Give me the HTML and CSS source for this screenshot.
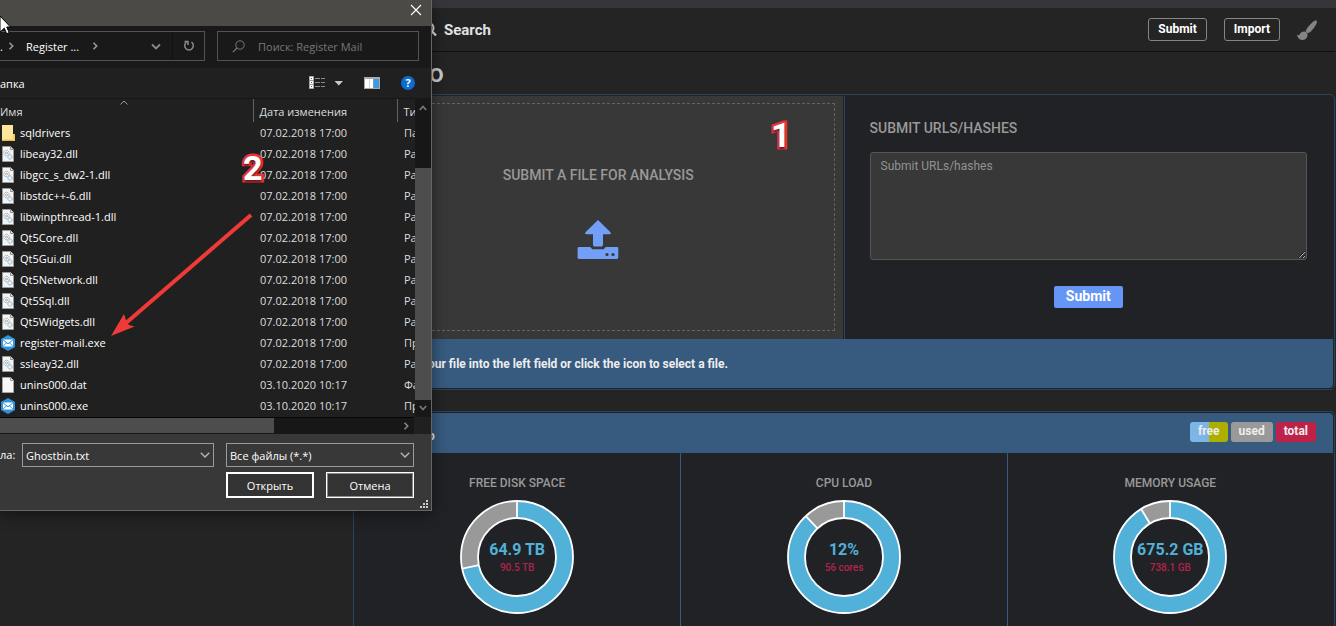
FILE: index.html
```html
<!DOCTYPE html>
<html lang="ru">
<head>
<meta charset="utf-8">
<title>Submit</title>
<link rel="stylesheet" href="styles.css">
</head>
<body>
<svg width="0" height="0" class="defs" aria-hidden="true">
  <symbol id="i-dll" viewBox="0 0 14 16">
    <path d="M1.500.5h8l3 3v12h-11z" fill="#f4f4f4" stroke="#9b9b9b"/>
    <path d="M9.500.5v3h3" fill="#ddd" stroke="#8f8f8f"/>
    <circle cx="5.500" cy="7" r="2.700" fill="#fff" stroke="#8d9499" stroke-dasharray="1 .6"/>
    <circle cx="5.500" cy="7" r="1" fill="none" stroke="#8d9499" stroke-width=".8"/>
    <circle cx="9" cy="11" r="2.200" fill="#d6edfb" stroke="#7fa9c6" stroke-dasharray="1 .6"/>
    <circle cx="9" cy="11" r=".8" fill="#fff"/>
  </symbol>
  <symbol id="i-dat" viewBox="0 0 14 16">
    <path d="M1.500.5h8l3 3v12h-11z" fill="#f8f8f8" stroke="#a5a5a5"/>
    <path d="M9.500.5v3h3" fill="#ddd" stroke="#999"/>
  </symbol>
  <symbol id="i-dir" viewBox="0 0 14 16">
    <path d="M1 0h11v9h2v7H1z" fill="#e8bd45"/>
    <path d="M1 0h11v14.500H1z" fill="#ffe69a"/>
    <path d="M11.500 9.500h2v6h-2z" fill="#f6d56e"/>
  </symbol>
  <symbol id="i-exe" viewBox="0 0 14 16">
    <path d="M7 0l7 4v8l-7 4-7-4V4z" fill="#2f93dc"/>
    <path d="M2 4.500h10v7H2z" fill="#fff"/>
    <path d="M2 4.800l5 4 5-4M2 11.300l3.600-3.600M12 11.300L8.400 7.700" fill="none" stroke="#2f93dc"/>
  </symbol>
  <symbol id="i-down" viewBox="0 0 10 6"><path d="M.8.8L5 5 9.200.8" fill="none" stroke="currentColor" stroke-width="1.300"/></symbol>
  <symbol id="i-right" viewBox="0 0 6 8"><path d="M1.500.8L4.700 4 1.500 7.200" fill="none" stroke="currentColor" stroke-width="1.600"/></symbol>
</svg>

<main class="page">
  <nav class="nav">
    <a class="nav-search" href="#search">
      <svg width="16" height="16" viewBox="0 0 16 16"><circle cx="6.500" cy="6" r="5" fill="none" stroke="#ddd" stroke-width="2"/><path d="M10 9.500l4 4" stroke="#ddd" stroke-width="2.400"/></svg>
      Search
    </a>
    <div class="nav-actions">
      <button class="nav-btn" type="button">Submit</button>
      <button class="nav-btn" type="button">Import</button>
      <button class="brush" type="button" aria-label="Theme">
        <svg width="20" height="20" viewBox="0 0 20 20" fill="#848484"><path d="M18.800.3c1 .2 1.300 1 1.100 1.900-.6 3-4.600 8.300-7.400 10.400-.8.6-1.900.7-2.700.1-.9-.6-1.200-1.700-.7-2.600C10.600 7 16.200.9 18.800.3z"/><path d="M7.600 11.600c1 .1 1.700.7 2.300 1.400.5.700.8 1.400.6 2.400-.5 3-2.600 4.500-5.300 4.500C2.200 19.900.3 17.500 0 14.500c.8.5 1.700 1 2.300.6.400-.3.500-.9.900-1.500.9-1.300 2.500-2.200 4.400-2z"/></svg>
      </button>
    </div>
  </nav>

  <h1 class="brand">o</h1>

  <section class="card">
    <div class="submit-grid">
      <div class="drop">
        <div class="drop-zone">
          <h2 class="label">SUBMIT A FILE FOR ANALYSIS</h2>
          <button class="upload" type="button" aria-label="Select a file">
            <svg width="42" height="40" viewBox="0 0 42 40"><path d="M21 0l12.500 12.200c.7.800.5 2-.8 2H26v10.300c0 1.400-.8 2-2 2h-6c-1.200 0-2-.6-2-2V14.200H9.300c-1.300 0-1.500-1.200-.8-2z" fill="#729ff8"/><path d="M2 27h11.300l1.300 1.400c.6.600 1.200.9 2 .9h8.800c.8 0 1.400-.3 2-.9l1.300-1.400H40c.8 0 1.300.6 1.300 1.400v9.200c0 .9-.6 1.400-1.400 1.400H2c-.8 0-1.400-.5-1.400-1.400v-9.200C.6 27.600 1.200 27 2 27z" fill="#729ff8"/><circle cx="30" cy="34.500" r="1.600" fill="#383838"/><circle cx="36" cy="34.500" r="1.600" fill="#383838"/></svg>
          </button>
        </div>
      </div>
      <form class="urls">
        <label class="label" for="urls">SUBMIT URLS/HASHES</label>
        <textarea id="urls" class="urls-text" placeholder="Submit URLs/hashes"></textarea>
        <button class="urls-submit" type="button">Submit</button>
      </form>
    </div>
    <p class="hint">our file into the left field or click the icon to select a file.</p>
  </section>

  <section class="card card-info">
    <header class="info-head">
      <h2 class="info-title">o</h2>
      <ul class="legend">
        <li class="tag tag-free">free</li>
        <li class="tag tag-used">used</li>
        <li class="tag tag-total">total</li>
      </ul>
    </header>
    <div class="gauges">
      <div class="gauge">
        <h3 class="gauge-title">FREE DISK SPACE</h3>
        <div class="ring">
          <svg width="114" height="114" viewBox="-57 -57 114 114"><g fill="none" transform="rotate(-90)"><circle r="47.500" stroke="#999" stroke-width="17"/><circle r="47.500" stroke="#51b1d8" stroke-width="17" pathLength="100" stroke-dasharray="71.700 100"/><g stroke="#fff" stroke-width="1.800"><circle r="56"/><circle r="39"/><path d="M39 0H56"/><path d="M39 0H56" transform="rotate(258)"/></g></g></svg>
          <div class="ring-text"><strong class="value">64.9 TB</strong><span class="sub">90.5 TB</span></div>
        </div>
      </div>
      <div class="gauge">
        <h3 class="gauge-title">CPU LOAD</h3>
        <div class="ring">
          <svg width="114" height="114" viewBox="-57 -57 114 114"><g fill="none" transform="rotate(-90)"><circle r="47.500" stroke="#999" stroke-width="17"/><circle r="47.500" stroke="#51b1d8" stroke-width="17" pathLength="100" stroke-dasharray="88 100"/><g stroke="#fff" stroke-width="1.800"><circle r="56"/><circle r="39"/><path d="M39 0H56"/><path d="M39 0H56" transform="rotate(317)"/></g></g></svg>
          <div class="ring-text"><strong class="value">12%</strong><span class="sub">56 cores</span></div>
        </div>
      </div>
      <div class="gauge">
        <h3 class="gauge-title">MEMORY USAGE</h3>
        <div class="ring">
          <svg width="114" height="114" viewBox="-57 -57 114 114"><g fill="none" transform="rotate(-90)"><circle r="47.500" stroke="#999" stroke-width="17"/><circle r="47.500" stroke="#51b1d8" stroke-width="17" pathLength="100" stroke-dasharray="91.500 100"/><g stroke="#fff" stroke-width="1.800"><circle r="56"/><circle r="39"/><path d="M39 0H56"/><path d="M39 0H56" transform="rotate(329)"/></g></g></svg>
          <div class="ring-text"><strong class="value">675.2 GB</strong><span class="sub">738.1 GB</span></div>
        </div>
      </div>
    </div>
  </section>
</main>

<div class="dialog" role="dialog" aria-label="Register Mail">
  <div class="titlebar">
    <button class="close" type="button" aria-label="Close"><svg width="12" height="12" viewBox="0 0 12 12"><path d="M1 1l10 10M11 1L1 11" stroke="#fff" stroke-width="1.200"/></svg></button>
  </div>
  <div class="addressbar">
    <div class="path">
      <span class="dots">.</span>
      <svg width="6" height="8"><use href="#i-right"/></svg>
      <span class="crumb">Register ...</span>
      <svg width="6" height="8"><use href="#i-right"/></svg>
      <button class="path-open" type="button" aria-label="History"><svg width="10" height="7" viewBox="0 0 10 7"><path d="M1 1.500l4 4 4-4" fill="none" stroke="#8a8a8a" stroke-width="1.800"/></svg></button>
      <button class="refresh" type="button" aria-label="Refresh"><svg width="12" height="12" viewBox="0 0 12 12"><path d="M8.500 2.200a4.300 4.300 0 1 1-5 0" fill="none" stroke="#8a8a8a" stroke-width="1.500"/><path d="M1.500 1.500H5v3.500" fill="none" stroke="#8a8a8a" stroke-width="1.500"/></svg></button>
    </div>
    <label class="find">
      <svg width="13" height="13" viewBox="0 0 13 13"><circle cx="8" cy="5" r="4.200" fill="none" stroke="#777"/><path d="M5 8L.8 12.200" stroke="#777" stroke-width="1.200"/></svg>
      <input class="find-input" type="text" placeholder="Поиск: Register Mail" aria-label="Поиск: Register Mail">
    </label>
  </div>
  <div class="toolbar">
    <span class="toolbar-text">апка</span>
    <button class="tool" type="button" aria-label="View">
      <svg width="34" height="14" viewBox="0 0 34 14"><path d="M.5.500h4v12h-4z" fill="#fff" stroke="#aaa"/><path d="M0 4.500h5M0 8.500h5" stroke="#999"/><path d="M2 2h1v1H2z" fill="#555"/><path d="M2 6h1v1H2z" fill="#a33"/><path d="M2 10h1v1H2z" fill="#c33"/><path d="M6 2.500h5M12 2.500h4M6 6.500h5M12 6.500h4M6 10.500h5M12 10.500h4" stroke="#8a8a8a"/><path d="M25.500 5h8.500l-4.200 4.500z" fill="#c8c8c8"/></svg>
    </button>
    <button class="tool" type="button" aria-label="Preview pane">
      <svg width="16" height="12" viewBox="0 0 16 12"><path d="M0 0h16v12H0z" fill="#aaa"/><path d="M1 2h4v9H1zM5.500 2H9v9H5.500z" fill="#fff"/><path d="M9.500 2H15v9H9.500z" fill="#3c9be8"/></svg>
    </button>
    <button class="help" type="button" aria-label="Help">?</button>
  </div>
  <div class="files">
    <div class="files-main">
      <svg class="sort" width="8" height="5" viewBox="0 0 8 5"><path d="M.5 4.500L4 1l3.500 3.500" fill="none" stroke="#999"/></svg>
      <table class="list">
        <colgroup><col class="c-name"><col class="c-date"><col class="c-type"></colgroup>
        <thead><tr><th>Имя</th><th>Дата изменения</th><th>Ти</th></tr></thead>
        <tbody>
          <tr><td><span class="file"><svg width="14" height="16"><use href="#i-dir"/></svg>sqldrivers</span></td><td>07.02.2018 17:00</td><td>Па</td></tr>
          <tr><td><span class="file"><svg width="14" height="16"><use href="#i-dll"/></svg>libeay32.dll</span></td><td>07.02.2018 17:00</td><td>Ра</td></tr>
          <tr><td><span class="file"><svg width="14" height="16"><use href="#i-dll"/></svg>libgcc_s_dw2-1.dll</span></td><td>07.02.2018 17:00</td><td>Ра</td></tr>
          <tr><td><span class="file"><svg width="14" height="16"><use href="#i-dll"/></svg>libstdc++-6.dll</span></td><td>07.02.2018 17:00</td><td>Ра</td></tr>
          <tr><td><span class="file"><svg width="14" height="16"><use href="#i-dll"/></svg>libwinpthread-1.dll</span></td><td>07.02.2018 17:00</td><td>Ра</td></tr>
          <tr><td><span class="file"><svg width="14" height="16"><use href="#i-dll"/></svg>Qt5Core.dll</span></td><td>07.02.2018 17:00</td><td>Ра</td></tr>
          <tr><td><span class="file"><svg width="14" height="16"><use href="#i-dll"/></svg>Qt5Gui.dll</span></td><td>07.02.2018 17:00</td><td>Ра</td></tr>
          <tr><td><span class="file"><svg width="14" height="16"><use href="#i-dll"/></svg>Qt5Network.dll</span></td><td>07.02.2018 17:00</td><td>Ра</td></tr>
          <tr><td><span class="file"><svg width="14" height="16"><use href="#i-dll"/></svg>Qt5Sql.dll</span></td><td>07.02.2018 17:00</td><td>Ра</td></tr>
          <tr><td><span class="file"><svg width="14" height="16"><use href="#i-dll"/></svg>Qt5Widgets.dll</span></td><td>07.02.2018 17:00</td><td>Ра</td></tr>
          <tr><td><span class="file"><svg width="14" height="16"><use href="#i-exe"/></svg>register-mail.exe</span></td><td>07.02.2018 17:00</td><td>Пр</td></tr>
          <tr><td><span class="file"><svg width="14" height="16"><use href="#i-dll"/></svg>ssleay32.dll</span></td><td>07.02.2018 17:00</td><td>Ра</td></tr>
          <tr><td><span class="file"><svg width="14" height="16"><use href="#i-dat"/></svg>unins000.dat</span></td><td>03.10.2020 10:17</td><td>Фа</td></tr>
          <tr><td><span class="file"><svg width="14" height="16"><use href="#i-exe"/></svg>unins000.exe</span></td><td>03.10.2020 10:17</td><td>Пр</td></tr>
        </tbody>
      </table>
    </div>
    <div class="vscroll">
      <svg width="8" height="6" viewBox="0 0 8 6"><path d="M.8 5L4 1.500 7.200 5" fill="none" stroke="#777" stroke-width="1.800"/></svg>
      <div class="vthumb"></div>
      <svg width="8" height="6" viewBox="0 0 8 6"><path d="M.8 1L4 4.500 7.200 1" fill="none" stroke="#777" stroke-width="1.800"/></svg>
    </div>
  </div>
  <div class="hscroll">
    <div class="htrack"><div class="hthumb"></div><svg width="6" height="8"><use href="#i-right"/></svg></div>
  </div>
  <div class="footer">
    <label class="name-label" for="fname">ла:</label>
    <div class="combo">
      <input id="fname" class="field" type="text" value="Ghostbin.txt">
      <svg class="chev" width="10" height="6"><use href="#i-down"/></svg>
    </div>
    <div class="combo">
      <select class="field" aria-label="Тип файлов"><option>Все файлы (*.*)</option></select>
      <svg class="chev" width="10" height="6"><use href="#i-down"/></svg>
    </div>
    <div class="buttons">
      <button class="btn btn-main" type="button">Открыть</button>
      <button class="btn" type="button">Отмена</button>
    </div>
    <svg class="grip" width="8" height="8" viewBox="0 0 8 8" fill="#ccc"><path d="M6 0h2v2H6zM3 3h2v2H3zM6 3h2v2H6zM0 6h2v2H0zM3 6h2v2H3zM6 6h2v2H6z"/></svg>
  </div>
</div>

<svg class="arrow" width="150" height="132" viewBox="0 0 150 132"><path d="M144 6L19 114" stroke="#f03a37" stroke-width="4"/><path d="M4 127L17 105l2.500 8 2.500 3 5.500 1.500z" fill="#f03a37"/></svg>
<svg class="cursor" width="12" height="20" viewBox="0 0 12 20"><path d="M0 0l10.500 11H6.700l2.500 5.600-2.500 1.200-2.400-5.600L0 16z" fill="#fff" stroke="#000"/></svg>
<span class="mark mark-1">1</span>
<span class="mark mark-2">2</span>
</body>
</html>
```
FILE: styles.css
```css
* { box-sizing: border-box; }
body {
  margin: 0;
  height: 100vh;
  overflow: hidden;
  position: relative;
  background: #242424;
  font-family: Roboto, sans-serif;
  color: #eee;
}
h1, h2, h3, p, ul { margin: 0; padding: 0; }
button { font: inherit; color: inherit; border: 0; background: none; padding: 0; }
svg { display: block; flex: none; }
.defs { position: absolute; }

/* Page */
.page {
  display: flex;
  flex-direction: column;
  min-height: 100vh;
  border-top: 8px solid #35363a;
  padding-left: 353px;
  padding-right: 1px;
}
.nav {
  display: flex;
  justify-content: space-between;
  align-items: center;
  height: 44px;
  border-bottom: 1px solid #111;
  margin-left: -353px;
  padding: 0 18px 0 422px;
}
.nav-search {
  display: flex;
  align-items: center;
  gap: 6px;
  font-size: 15px;
  font-weight: 700;
  color: #e2e2e2;
  text-decoration: none;
}
.nav-actions { display: flex; align-items: center; gap: 17px; }
.nav-btn {
  height: 23px;
  padding: 0 9px 2px;
  border: 1px solid #858585;
  border-radius: 3px;
  font-size: 12px;
  font-weight: 700;
  color: #fff;
}
.brand {
  height: 42px;
  padding-left: 76px;
  font-size: 26px;
  line-height: 42px;
  font-weight: 500;
  color: #ccc;
}
.card {
  border: 1px solid #2a4360;
  border-radius: 5px;
  background: #212226;
  padding: 1px 1px 1px 0;
  margin-bottom: 21px;
}
.card-info {
  display: flex;
  flex-direction: column;
  flex: 1;
  margin-bottom: 0;
  padding-bottom: 0;
  border-bottom: 0;
  border-radius: 5px 5px 0 0;
}
.submit-grid { display: grid; grid-template-columns: 1fr 1fr; }
.drop { background: #383838; padding: 7px 8px 8px; border-right: 1px solid #212226; }
.drop-zone {
  display: flex;
  flex-direction: column;
  align-items: center;
  gap: 37px;
  height: 100%;
  padding-top: 63px;
  border: 1px dashed #636363;
}
.label { font-size: 14px; line-height: 16px; font-weight: 500; color: #999; }
.urls {
  display: flex;
  flex-direction: column;
  padding: 24px 26px 31px 25px;
  border-left: 1px solid #2a4360;
}
.urls-text {
  height: 108px;
  margin: 16px 0 26px;
  padding: 4px 10px;
  background: #383838;
  border: 1px solid #555;
  border-radius: 3px;
  color: #ddd;
  font: 12px/18px Roboto, sans-serif;
}
.urls-text::placeholder { color: #929292; }
.urls-submit {
  align-self: center;
  width: 69px;
  height: 22px;
  padding-bottom: 2px;
  border-radius: 2px;
  background: #6595f5;
  font-size: 14px;
  font-weight: 700;
  color: #fff;
}
.hint {
  height: 49px;
  padding-left: 74px;
  background: #375a7f;
  border-radius: 0 0 4px 4px;
  font-size: 12px;
  line-height: 50px;
  font-weight: 700;
}
.info-head {
  display: flex;
  justify-content: space-between;
  height: 40px;
  padding: 9px 17px 0 74px;
  background: #375a7f;
  border-radius: 4px 4px 0 0;
}
.info-title { font-size: 12px; line-height: 28px; }
.legend { display: flex; gap: 3px; list-style: none; }
.tag {
  height: 20px;
  padding: 0 8px;
  border-radius: 3px;
  font-size: 12px;
  line-height: 18px;
  font-weight: 700;
}
.tag-free { background: linear-gradient(90deg, #7db6e6 50%, #adaf00 50%); }
.tag-used { background: #999; }
.tag-total { background: #bf2249; }
.gauges { display: grid; grid-template-columns: repeat(3, 1fr); flex: 1; }
.gauge {
  display: flex;
  flex-direction: column;
  align-items: center;
  gap: 10px;
  padding-top: 23px;
}
.gauge + .gauge { border-left: 1px solid #375a7f; }
.gauge-title { font-size: 12px; line-height: 14px; font-weight: 500; color: #999; }
.ring { display: grid; place-items: center; }
.ring > * { grid-area: 1 / 1; }
.ring-text { display: flex; flex-direction: column; align-items: center; gap: 2px; }
.value { font-size: 16px; line-height: 20px; font-weight: 700; color: #51b1d8; }
.sub { font-size: 10px; line-height: 12px; font-weight: 500; color: #b3224b; }

/* File dialog */
.dialog {
  position: absolute;
  top: 0;
  left: 0;
  width: 432px;
  background: #202020;
  border: solid #656565;
  border-width: 0 1px 1px 0;
  box-shadow: 0 4px 14px rgba(0, 0, 0, .45);
  font-family: "Open Sans", "Noto Sans", sans-serif;
  font-size: 11px;
  color: #fff;
}
.titlebar { display: flex; justify-content: flex-end; height: 26px; padding: 4px 9px; background: #4b4a47; }
.close { width: 12px; height: 12px; }
.addressbar { display: flex; gap: 12px; height: 42px; padding: 5px 12px 7px 0; background: #191919; }
.path {
  display: flex;
  flex: none;
  align-items: center;
  width: 205px;
  border: 1px solid #535353;
  border-left: 0;
  color: #999;
}
.dots { width: 8px; color: #fff; }
.crumb { width: 55px; margin: 0 11px 0 12px; color: #fff; white-space: nowrap; }
.path-open { margin-left: auto; padding-right: 11px; }
.refresh { display: flex; align-items: center; align-self: stretch; padding: 0 9px 0 10px; border-left: 1px solid #111; }
.find { display: flex; align-items: center; flex: 1; min-width: 0; gap: 13px; padding: 0 14px; border: 1px solid #535353; }
.find-input { flex: 1; min-width: 0; border: 0; padding: 0; background: none; font: inherit; color: #fff; outline: 0; }
.find-input::placeholder { color: #777; }
.toolbar { display: flex; align-items: center; height: 31px; gap: 21px; padding-right: 16px; border-bottom: 1px solid #171717; }
.toolbar-text { margin-right: auto; }
.help {
  width: 14px;
  height: 14px;
  border-radius: 50%;
  background: #0b6dd0;
  font-size: 11px;
  line-height: 14px;
  font-weight: 700;
}
.files { display: flex; }
.files-main { flex: 1; min-width: 0; overflow: hidden; position: relative; padding-bottom: 1px; }
.sort { position: absolute; left: 120px; top: 1px; }
.list { width: 100%; table-layout: fixed; border-collapse: collapse; }
.c-name { width: 253px; }
.c-date { width: 144px; }
.list th {
  height: 23px;
  padding: 2px 0 0 6px;
  text-align: left;
  font-weight: 400;
  color: #ddd;
  line-height: 20px;
  white-space: nowrap;
  border-left: 1px solid #636363;
}
.list th:first-child { padding-left: 0; border-left: 0; }
.list td {
  height: 21px;
  padding: 0 0 0 7px;
  line-height: 20px;
  color: #ddd;
  white-space: nowrap;
  overflow: hidden;
}
.list td:first-child { padding: 0 0 0 1px; color: #fff; }
.file { display: flex; align-items: center; gap: 5px; }
.vscroll {
  display: flex;
  flex-direction: column;
  align-items: center;
  width: 16px;
  padding: 6px 0;
  background: #171717;
}
.vthumb { align-self: stretch; height: 232px; margin: auto 0 5px; background: #4d4d4d; }
.hscroll { padding-right: 17px; }
.htrack {
  display: flex;
  align-items: center;
  justify-content: space-between;
  height: 17px;
  padding-right: 5px;
  background: #171717;
  border-top: 1px solid #050505;
  border-bottom: 1px solid #171717;
  color: #888;
}
.hthumb { width: 274px; height: 15px; background: #4d4d4d; }
.footer {
  display: grid;
  grid-template-columns: 10px 192px 188px;
  column-gap: 12px;
  row-gap: 5px;
  padding: 9px 17px 12px 0;
  background: #383838;
}
.name-label { line-height: 24px; white-space: nowrap; }
.combo { display: grid; align-items: center; color: #bbb; }
.combo > * { grid-area: 1 / 1; }
.field {
  width: 100%;
  height: 24px;
  padding: 0 3px;
  appearance: none;
  border: 1px solid #9b9b9b;
  border-radius: 0;
  background: #383838;
  font: inherit;
  color: #fff;
}
.chev { justify-self: end; margin-right: 4px; pointer-events: none; }
.buttons { grid-column: 3; display: grid; grid-template-columns: 1fr 1fr; gap: 12px; }
.btn { height: 26px; border: 1px solid #fff; outline: 1px solid #888; outline-offset: -2px; background: #333; }
.btn-main { border-width: 2px; outline: 0; }
.grip { position: absolute; right: 3px; bottom: 2px; }

/* Annotations */
.arrow { position: absolute; left: 107px; top: 209px; }
.cursor { position: absolute; left: 0; top: 16px; }
.mark {
  position: absolute;
  font: 700 34px/34px Roboto, sans-serif;
  color: #fff;
  -webkit-text-stroke: 5px #e93438;
  paint-order: stroke fill;
  text-shadow: 0 2px 2px #0008;
}
.mark-1 { left: 771px; top: 118px; }
.mark-2 { left: 243px; top: 151px; }
```
